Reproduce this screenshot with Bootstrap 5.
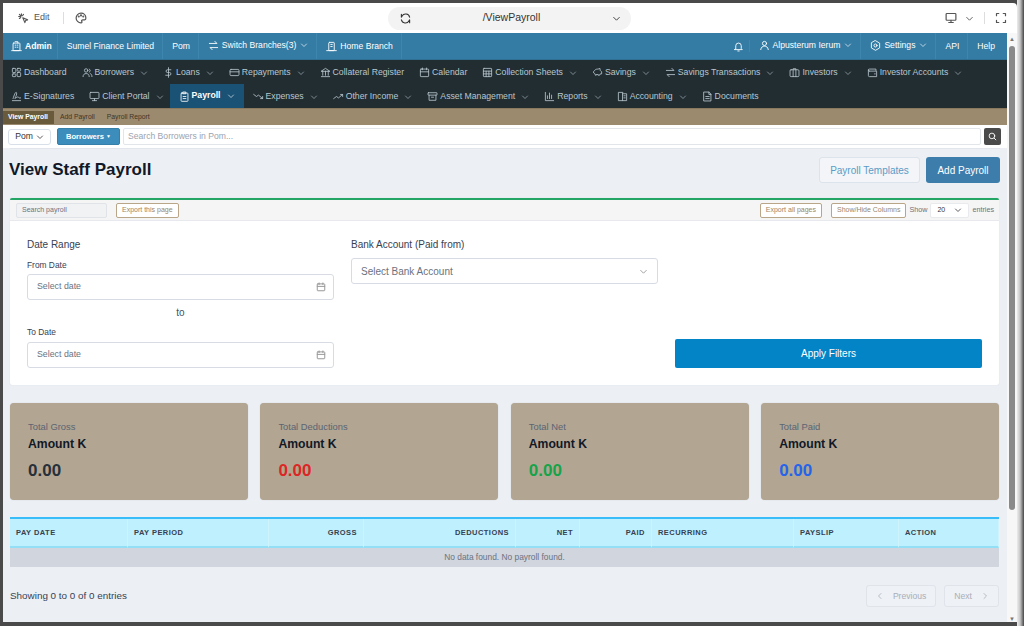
<!DOCTYPE html>
<html lang="en">
<head>
  <meta charset="UTF-8">
  <title>View Payroll</title>
  <link href="https://cdn.jsdelivr.net/npm/bootstrap@5.3.0/dist/css/bootstrap.min.css" rel="stylesheet">
  <style>
    html, body { height: 100%; overflow: hidden; }
    body { background: linear-gradient(to right, #4a4a4a 1017px, #ececec 1017px, #c8c8c8 1020px, #8a8a8a 1022px, #444 1024px); font-family: "Liberation Sans", Arial, sans-serif; font-size: 9px; color: #1f2937; padding: 3px 7px 4px 3px; }
    svg { fill: none; stroke: currentColor; stroke-width: 1.6; stroke-linecap: round; stroke-linejoin: round; flex: none; }
    .chev { margin-left: 4px; }

    .shell { height: 100%; background: #fff; display: flex; flex-direction: column; border-top-right-radius: 4px; }
    .browser-bar { height: 30px; flex: none; padding: 0 10px 0 15px; color: #555; font-size: 9px; }
    .bar-left { width: 370px; gap: 5px; }
    .bar-sep { width: 1px; height: 12px; background: #ddd; }
    .sep-left { margin: 0 6px 0 8px; }
    .sep-right { margin: 0 6px 0 6px; }
    .url-pill { width: 243px; height: 23px; background: #f3f3f3; border-radius: 12px; font-size: 10.5px; color: #333; padding: 0 10px 0 12px; }
    .page-wrap { flex: 1; min-height: 0; display: flex; }
    .page { flex: 1; min-width: 0; background: #ecf0f5; }
    .scroll-rail { width: 10px; flex: none; background: #f7f7f7; display: flex; flex-direction: column; align-items: center; padding: 3px 0 0 0; color: #777; font-size: 6px; line-height: 6px; }
    .scroll-thumb { width: 6px; height: 464px; background: #8a8a8a; border-radius: 3px; margin-top: 4px; margin-bottom: auto; }

    .top-blue { height: 27px; background: #357ca5; color: #fff; font-size: 8.6px; border-bottom: 1px solid #2f6f95; }
    .top-cell { padding: 1px 8px 0 9px; height: 100%; display: flex; align-items: center; gap: 3px; border-right: 1px solid #3f86ae; white-space: nowrap; }
    .top-cell svg { stroke-width: 1.3; }
    .top-cell .chev { margin-left: 1px; }
    .no-line { border-right: 0; }
    .cell-raise { padding-top: 0; padding-bottom: 2px; }

    .side-menu { background: #222d32; color: #b8c7ce; font-size: 8.7px; height: 48px; }
    .menu-row { height: 24px; padding: 1px 0 0 8px; gap: 15px; }
    .menu-item { height: 23px; display: flex; align-items: center; gap: 2px; white-space: nowrap; }
    .menu-item svg { stroke-width: 1.2; }
    .menu-on { background: #1a5276; color: #fff; height: 24px; margin: -1px -6px 0 -9px; padding: 0 9px 0 9px; }

    .sub-tabs { height: 17px; background: #9c8a6e; border-top: 1px solid #8a795e; font-size: 6.8px; color: #3e3526; }
    .sub-tab { padding: 0 6px; height: 13px; display: flex; align-items: center; }
    .sub-on { background: #6a5a3c; color: #fff; font-weight: bold; padding: 0 6px 0 5px; margin-right: 0; }

    .search-strip { height: 23px; background: #fff; padding: 0 6px 0 5px; gap: 3px; }
    .branch-pick { width: 43px; height: 16px; border: 1px solid #d8dfe8; border-radius: 3px; font-size: 8.6px; color: #333; gap: 3px; }
    .branch-pick .chev { margin-left: 0; }
    .borrow-btn { width: 63px; height: 17px; margin-left: 3px; background: #3c8dbc; color: #fff; border-radius: 2px; font-size: 7.6px; font-weight: bold; border: 1px solid #367fa9; }
    .caret-mini { font-size: 5px; }
    .search-box { flex: 1; height: 17px; border: 1px solid #e2e5ea; border-radius: 2px; color: #9ca3af; font-size: 8.6px; padding-left: 4px; }
    .search-go { width: 17px; height: 17px; background: #4a4a4a; border-radius: 2px; color: #fff; }

    .content { padding: 0 8px 0 7px; }
    .title-row { height: 50px; padding-top: 8px; border-top: 1px solid #e2e6ec; margin-right: -1px; }
    .title-row h1 { font-size: 17px; line-height: 26px; font-weight: bold; margin: 0 0 0 -1px; color: #111827; }
    .title-btns { gap: 6px; }
    .tpl-btn { height: 26px; width: 101px; border: 1px solid #dde3ea; background: #f3f5f8; border-radius: 3px; color: #5a9bc7; font-size: 10px; }
    .add-btn { height: 26px; width: 74px; background: #3c7dac; border-radius: 3px; color: #fff; font-size: 10px; }

    .filter-box { background: #fff; border-top: 2px solid #22a565; border-radius: 2px; box-shadow: 0 0 1px #ccd; height: 187px; }
    .tool-strip { height: 21px; background: #f5f5f5; border-bottom: 1px solid #e7e9ee; padding: 0 5px 0 6px; font-size: 7.2px; color: #6b7280; gap: 3px; }
    .tool-search { width: 91px; height: 15px; border: 1px solid #e0e3e8; border-radius: 2px; background: #f1f2f4; color: #6b7280; padding-left: 5px; font-size: 7px; }
    .tool-btn { height: 15px; border: 1px solid #b9a587; border-radius: 2px; background: #fff; color: #9a8669; padding: 0 5px; font-size: 7px; white-space: nowrap; }
    .btn-apart { margin-left: 6px; }
    .page-size { width: 39px; height: 15px; background: #fff; border: 1px solid #e8eaee; border-radius: 2px; color: #333; font-size: 7px; padding: 0 6px; }

    .filter-grid { padding: 18px 17px 0 17px; height: 164px; display: grid; grid-template-columns: 307px 307px 307px; column-gap: 17px; }
    .field-title { font-size: 10px; color: #374151; line-height: 12px; margin-bottom: 9px; }
    .bank-title { margin-bottom: 7px; }
    .field-small { font-size: 8.4px; color: #374151; line-height: 10px; margin-bottom: 4px; }
    .field-low { margin-bottom: 5px; }
    .date-box { height: 26px; border: 1px solid #d8dbe3; border-radius: 3px; padding: 0 7px 0 9px; color: #6b7280; font-size: 8.8px; }
    .date-box svg, .bank-box svg { color: #999; }
    .to-label { text-align: center; font-size: 10px; color: #3b5568; line-height: 12px; margin: 7px 0 8px 0; }
    .bank-box { height: 26px; border: 1px solid #d8dbe3; border-radius: 3px; padding: 0 9px; color: #6b7280; font-size: 10px; }
    .apply-cell { display: flex; align-items: flex-end; padding-bottom: 17px; }
    .apply-btn { width: 100%; height: 29px; background: #0284c7; color: #fff; font-size: 10px; border-radius: 2px; }

    .stat-grid { display: grid; grid-template-columns: repeat(4, 1fr); gap: 12.5px; margin-top: 18px; }
    .stat-box { height: 97px; background: #b2a692; border-radius: 4px; padding: 18px 18px; box-shadow: 0 0 1px #bbb; }
    .stat-label { font-size: 9.4px; color: #5b6472; line-height: 12px; }
    .stat-head { font-size: 12.2px; font-weight: bold; color: #111827; line-height: 16px; margin-top: 3px; }
    .stat-num { font-size: 17px; font-weight: bold; line-height: 20px; margin-top: 9px; color: #27303a; }
    .num-red { color: #dc2626; }
    .num-green { color: #16a34a; }
    .num-blue { color: #2563eb; }

    .pay-table { margin-top: 17px; width: 100%; table-layout: fixed; border-collapse: separate; border-spacing: 0; border-top: 2px solid #38bdf8; font-size: 7.5px; }
    .pay-table th { background: #bef0fd; height: 29px; padding: 0 6px; font-weight: bold; letter-spacing: .45px; color: #374151; border-bottom: 2px solid #93dff5; border-right: 1px solid #cdf4fd; white-space: nowrap; }
    .pay-table td { background: #d1d5de; height: 19px; text-align: center; color: #6b7280; font-size: 8.4px; padding: 0; }

    .foot-row { margin-top: 18px; font-size: 9.9px; color: #374151; }
    .pg-btn { height: 22px; border: 1px solid #e0e4ea; border-radius: 3px; background: #eef1f5; color: #a8aeb8; font-size: 8.6px; padding: 0 9px; gap: 9px; }
  </style>
</head>
<body>
  <div class="shell">

    <!-- browser toolbar -->
    <div class="browser-bar d-flex align-items-center">
      <div class="bar-left d-flex align-items-center">
        <svg width="11" height="11" viewBox="0 0 16 16"><path d="M7 7l7 3-3 1-1 3zM5 1v3M1 5h3M2 2l2 2M8 2L6.500 4M2 8l2-1.500"/></svg>
        <span>Edit</span>
        <span class="bar-sep sep-left"></span>
        <svg width="12" height="12" viewBox="0 0 16 16"><path d="M8 1.500a6.500 6.500 0 1 0 0 13c1.500 0 1.500-1 1-2s0-2 1.500-2H13c1 0 1.500-1 1.500-2.500C14.500 4 11.500 1.500 8 1.500z"/><circle cx="5" cy="6" r=".6"/><circle cx="8" cy="4.500" r=".6"/><circle cx="11" cy="6" r=".6"/></svg>
      </div>
      <div class="url-pill d-flex align-items-center justify-content-between">
        <svg width="11" height="11" viewBox="0 0 16 16"><path d="M14 6A6 6 0 0 0 3 4.500L2 6V2M2 10a6 6 0 0 0 11 1.500L14 10v4"/></svg>
        <span>/ViewPayroll</span>
        <svg width="9" height="9" viewBox="0 0 16 16"><path d="M3 6l5 5 5-5"/></svg>
      </div>
      <div class="d-flex align-items-center ms-auto gap-1">
        <svg width="12" height="12" viewBox="0 0 16 16"><rect x="1.500" y="2" width="13" height="9" rx="1"/><path d="M8 11v3M5 14h6"/></svg>
        <svg class="chev" width="9" height="9" viewBox="0 0 16 16"><path d="M3 6l5 5 5-5"/></svg>
        <span class="bar-sep sep-right"></span>
        <svg width="12" height="12" viewBox="0 0 16 16"><path d="M2 5V2h3M11 2h3v3M14 11v3h-3M5 14H2v-3"/></svg>
      </div>
    </div>

    <div class="page-wrap">
      <div class="page">

        <!-- blue bar -->
        <div class="top-blue d-flex align-items-center justify-content-between">
          <div class="d-flex h-100">
            <div class="top-cell fw-bold" style="padding-left:8px;padding-right:5px">
              <svg width="11" height="11" viewBox="0 0 16 16"><rect x="3" y="3" width="10" height="11" rx="1"/><path d="M1 14h14M6 6h1M9 6h1M6 9h1M9 9h1M6 1h4v2"/></svg>Admin
            </div>
            <div class="top-cell">Sumel Finance Limited</div>
            <div class="top-cell">Pom</div>
            <div class="top-cell cell-raise">
              <svg width="11" height="11" viewBox="0 0 16 16"><path d="M2 5h11l-3-3M14 11H3l3 3"/></svg>Switch Branches(3)
              <svg class="chev" width="8" height="8" viewBox="0 0 16 16"><path d="M3 6l5 5 5-5"/></svg>
            </div>
            <div class="top-cell">
              <svg width="11" height="11" viewBox="0 0 16 16"><rect x="4" y="2" width="8" height="12" rx="1"/><path d="M1 14h14M7 5h2M7 8h2"/></svg>Home Branch
            </div>
          </div>
          <div class="d-flex h-100 align-items-center">
            <div class="top-cell" style="padding-right:5px;height:12px">
              <svg width="11" height="11" viewBox="0 0 16 16"><path d="M4 11V7a4 4 0 0 1 8 0v4l1.500 1.500h-11zM7 14.500h2"/></svg>
            </div>
            <div class="top-cell cell-raise no-line">
              <svg width="11" height="11" viewBox="0 0 16 16"><circle cx="8" cy="5" r="3"/><path d="M2.500 14c.5-4 3-5 5.500-5s5 1 5.500 5"/></svg>Alpusterum Ierum
              <svg class="chev" width="8" height="8" viewBox="0 0 16 16"><path d="M3 6l5 5 5-5"/></svg>
            </div>
            <div class="top-cell cell-raise" style="border-left:1px solid #3f86ae">
              <svg width="11" height="11" viewBox="0 0 16 16"><path d="M8 1l6 3.500v7L8 15l-6-3.500v-7z"/><circle cx="8" cy="8" r="2.200"/></svg>Settings
              <svg class="chev" width="8" height="8" viewBox="0 0 16 16"><path d="M3 6l5 5 5-5"/></svg>
            </div>
            <div class="top-cell">API</div>
            <div class="top-cell no-line" style="padding-right:12px">Help</div>
          </div>
        </div>

        <!-- main menu -->
        <div class="side-menu">
          <div class="menu-row d-flex align-items-center">
            <div class="menu-item"><svg width="11" height="11" viewBox="0 0 16 16"><rect x="2" y="2" width="5" height="6" rx="1"/><rect x="9" y="2" width="5" height="4" rx="1"/><rect x="2" y="10" width="5" height="4" rx="1"/><rect x="9" y="8" width="5" height="6" rx="1"/></svg>Dashboard</div>
            <div class="menu-item"><svg width="11" height="11" viewBox="0 0 16 16"><circle cx="6" cy="5" r="2.500"/><path d="M1.500 14c0-3 2-4.500 4.500-4.500s4.500 1.500 4.500 4.500M10.500 3a2.500 2.500 0 0 1 0 4.500M12 9.500c1.500.5 2.500 2 2.500 4.500"/></svg>Borrowers <svg class="chev" width="8" height="8" viewBox="0 0 16 16"><path d="M3 6l5 5 5-5"/></svg></div>
            <div class="menu-item"><svg width="11" height="11" viewBox="0 0 16 16"><path d="M8 1v14M11.500 4H6.500a2 2 0 0 0 0 4h3a2 2 0 0 1 0 4H4"/></svg>Loans <svg class="chev" width="8" height="8" viewBox="0 0 16 16"><path d="M3 6l5 5 5-5"/></svg></div>
            <div class="menu-item"><svg width="11" height="11" viewBox="0 0 16 16"><rect x="1.500" y="3.500" width="13" height="9" rx="1.500"/><path d="M1.500 7h13"/></svg>Repayments <svg class="chev" width="8" height="8" viewBox="0 0 16 16"><path d="M3 6l5 5 5-5"/></svg></div>
            <div class="menu-item"><svg width="11" height="11" viewBox="0 0 16 16"><path d="M2 6l6-4 6 4zM4 6v6M8 6v6M12 6v6M2 14h12"/></svg>Collateral Register</div>
            <div class="menu-item"><svg width="11" height="11" viewBox="0 0 16 16"><rect x="2" y="3" width="12" height="11" rx="1"/><path d="M2 7h12M5 1.500V4M11 1.500V4"/></svg>Calendar</div>
            <div class="menu-item"><svg width="11" height="11" viewBox="0 0 16 16"><rect x="2" y="2" width="12" height="12" rx="1"/><path d="M2 6h12M2 10h12M6 6v8M10 6v8"/></svg>Collection Sheets <svg class="chev" width="8" height="8" viewBox="0 0 16 16"><path d="M3 6l5 5 5-5"/></svg></div>
            <div class="menu-item"><svg width="11" height="11" viewBox="0 0 16 16"><path d="M3 6c1-2 3-3 5.500-3 1 0 2-.5 3-1l.5 3 2 2v3h-2l-1 2H9v-1H6v1H5L4 9.500 2 8z"/></svg>Savings <svg class="chev" width="8" height="8" viewBox="0 0 16 16"><path d="M3 6l5 5 5-5"/></svg></div>
            <div class="menu-item"><svg width="11" height="11" viewBox="0 0 16 16"><path d="M2 5h11l-3-3M14 11H3l3 3"/></svg>Savings Transactions <svg class="chev" width="8" height="8" viewBox="0 0 16 16"><path d="M3 6l5 5 5-5"/></svg></div>
            <div class="menu-item"><svg width="11" height="11" viewBox="0 0 16 16"><rect x="1.500" y="4" width="13" height="10" rx="1.500"/><path d="M6 14V2.500h4V14"/></svg>Investors <svg class="chev" width="8" height="8" viewBox="0 0 16 16"><path d="M3 6l5 5 5-5"/></svg></div>
            <div class="menu-item"><svg width="11" height="11" viewBox="0 0 16 16"><path d="M13 5V3H3.500a1.500 1.500 0 0 0 0 3M2 4.500v8A1.500 1.500 0 0 0 3.500 14H14V6H3.500M11 10h1"/></svg>Investor Accounts <svg class="chev" width="8" height="8" viewBox="0 0 16 16"><path d="M3 6l5 5 5-5"/></svg></div>
          </div>
          <div class="menu-row d-flex align-items-center">
            <div class="menu-item"><svg width="11" height="11" viewBox="0 0 16 16"><path d="M2 14h12M3 11c2-6 3-9 4.500-9S8 7 6 10s4-3 5-1 1 1 3 1"/></svg>E-Signatures</div>
            <div class="menu-item"><svg width="11" height="11" viewBox="0 0 16 16"><rect x="1.500" y="2" width="13" height="9" rx="1"/><path d="M8 11v3M5 14h6"/></svg>Client Portal <svg class="chev" width="8" height="8" viewBox="0 0 16 16"><path d="M3 6l5 5 5-5"/></svg></div>
            <div class="menu-item menu-on fw-bold"><svg width="11" height="11" viewBox="0 0 16 16"><rect x="3" y="3" width="10" height="12" rx="1"/><path d="M6 1.500h4V4H6zM6 8h4M6 11h4"/></svg>Payroll <svg class="chev" width="8" height="8" viewBox="0 0 16 16"><path d="M3 6l5 5 5-5"/></svg></div>
            <div class="menu-item"><svg width="11" height="11" viewBox="0 0 16 16"><path d="M1 5l4 3 3-2 6 5M14 8v3h-3"/></svg>Expenses <svg class="chev" width="8" height="8" viewBox="0 0 16 16"><path d="M3 6l5 5 5-5"/></svg></div>
            <div class="menu-item"><svg width="11" height="11" viewBox="0 0 16 16"><path d="M1 11l4-3 3 2 6-5M14 8V5h-3"/></svg>Other Income <svg class="chev" width="8" height="8" viewBox="0 0 16 16"><path d="M3 6l5 5 5-5"/></svg></div>
            <div class="menu-item"><svg width="11" height="11" viewBox="0 0 16 16"><rect x="1.500" y="2.500" width="13" height="3.500" rx=".5"/><path d="M3 6v7.500h10V6M6.500 9h3"/></svg>Asset Management <svg class="chev" width="8" height="8" viewBox="0 0 16 16"><path d="M3 6l5 5 5-5"/></svg></div>
            <div class="menu-item"><svg width="11" height="11" viewBox="0 0 16 16"><path d="M2 2v12h12M5 11V7M8 11V3M11 11V6"/></svg>Reports <svg class="chev" width="8" height="8" viewBox="0 0 16 16"><path d="M3 6l5 5 5-5"/></svg></div>
            <div class="menu-item"><svg width="11" height="11" viewBox="0 0 16 16"><path d="M8 4v10H2V2h6zM8 4h6v10H8M10 7h2M10 10h2"/></svg>Accounting <svg class="chev" width="8" height="8" viewBox="0 0 16 16"><path d="M3 6l5 5 5-5"/></svg></div>
            <div class="menu-item"><svg width="11" height="11" viewBox="0 0 16 16"><path d="M3 1.500h7l3 3V14.500H3zM10 1.500V5h3M5.500 8h5M5.500 11h5"/></svg>Documents</div>
          </div>
        </div>

        <!-- sub tabs -->
        <div class="sub-tabs d-flex align-items-center">
          <div class="sub-tab sub-on">View Payroll</div>
          <div class="sub-tab">Add Payroll</div>
          <div class="sub-tab">Payroll Report</div>
        </div>

        <!-- borrower search -->
        <div class="search-strip d-flex align-items-center">
          <div class="branch-pick d-flex align-items-center justify-content-center">Pom <svg class="chev" width="8" height="8" viewBox="0 0 16 16"><path d="M3 6l5 5 5-5"/></svg></div>
          <div class="borrow-btn d-flex align-items-center justify-content-center">Borrowers&nbsp;<span class="caret-mini">▼</span></div>
          <div class="search-box d-flex align-items-center">Search Borrowers in Pom...</div>
          <div class="search-go d-flex align-items-center justify-content-center"><svg width="9" height="9" viewBox="0 0 16 16"><circle cx="7" cy="7" r="5"/><path d="M11 11l3 3"/></svg></div>
        </div>

        <div class="content">
          <div class="title-row d-flex align-items-start justify-content-between">
            <h1>View Staff Payroll</h1>
            <div class="title-btns d-flex">
              <div class="tpl-btn d-flex align-items-center justify-content-center">Payroll Templates</div>
              <div class="add-btn d-flex align-items-center justify-content-center">Add Payroll</div>
            </div>
          </div>

          <!-- filters -->
          <div class="filter-box">
            <div class="tool-strip d-flex align-items-center">
              <div class="tool-search d-flex align-items-center">Search payroll</div>
              <div class="tool-btn d-flex align-items-center btn-apart">Export this page</div>
              <div class="tool-btn d-flex align-items-center ms-auto">Export all pages</div>
              <div class="tool-btn d-flex align-items-center btn-apart">Show/Hide Columns</div>
              <span>Show</span>
              <div class="page-size d-flex align-items-center justify-content-between">20 <svg width="8" height="8" viewBox="0 0 16 16"><path d="M3 6l5 5 5-5"/></svg></div>
              <span>entries</span>
            </div>
            <div class="filter-grid">
              <div>
                <div class="field-title">Date Range</div>
                <div class="field-small">From Date</div>
                <div class="date-box d-flex align-items-center justify-content-between">Select date <svg width="10" height="10" viewBox="0 0 16 16"><rect x="2" y="3" width="12" height="11" rx="1"/><path d="M2 7h12M5 1.500V4M11 1.500V4"/></svg></div>
                <div class="to-label">to</div>
                <div class="field-small field-low">To Date</div>
                <div class="date-box d-flex align-items-center justify-content-between">Select date <svg width="10" height="10" viewBox="0 0 16 16"><rect x="2" y="3" width="12" height="11" rx="1"/><path d="M2 7h12M5 1.500V4M11 1.500V4"/></svg></div>
              </div>
              <div>
                <div class="field-title bank-title">Bank Account (Paid from)</div>
                <div class="bank-box d-flex align-items-center justify-content-between">Select Bank Account <svg width="9" height="9" viewBox="0 0 16 16"><path d="M3 6l5 5 5-5"/></svg></div>
              </div>
              <div class="apply-cell">
                <div class="apply-btn d-flex align-items-center justify-content-center">Apply Filters</div>
              </div>
            </div>
          </div>

          <!-- totals -->
          <div class="stat-grid">
            <div class="stat-box"><div class="stat-label">Total Gross</div><div class="stat-head">Amount K</div><div class="stat-num">0.00</div></div>
            <div class="stat-box"><div class="stat-label">Total Deductions</div><div class="stat-head">Amount K</div><div class="stat-num num-red">0.00</div></div>
            <div class="stat-box"><div class="stat-label">Total Net</div><div class="stat-head">Amount K</div><div class="stat-num num-green">0.00</div></div>
            <div class="stat-box"><div class="stat-label">Total Paid</div><div class="stat-head">Amount K</div><div class="stat-num num-blue">0.00</div></div>
          </div>

          <!-- payroll table -->
          <table class="pay-table">
            <colgroup>
              <col style="width:118px"><col style="width:141px"><col style="width:95px"><col style="width:152px"><col style="width:64px"><col style="width:72px"><col style="width:142px"><col style="width:105px"><col>
            </colgroup>
            <thead>
              <tr>
                <th>PAY DATE</th><th>PAY PERIOD</th><th class="text-end">GROSS</th><th class="text-end">DEDUCTIONS</th><th class="text-end">NET</th><th class="text-end">PAID</th><th>RECURRING</th><th>PAYSLIP</th><th>ACTION</th>
              </tr>
            </thead>
            <tbody>
              <tr><td colspan="9">No data found. No payroll found.</td></tr>
            </tbody>
          </table>

          <div class="foot-row d-flex align-items-center justify-content-between">
            <span>Showing 0 to 0 of 0 entries</span>
            <div class="d-flex gap-2">
              <div class="pg-btn d-flex align-items-center"><svg width="8" height="8" viewBox="0 0 16 16"><path d="M10 3L5 8l5 5"/></svg>Previous</div>
              <div class="pg-btn d-flex align-items-center">Next<svg width="8" height="8" viewBox="0 0 16 16"><path d="M6 3l5 5-5 5"/></svg></div>
            </div>
          </div>
        </div>
      </div>

      <div class="scroll-rail">
        <span>▲</span>
        <div class="scroll-thumb"></div>
        <span>▼</span>
      </div>
    </div>
  </div>
  <script src="https://cdn.jsdelivr.net/npm/bootstrap@5.3.0/dist/js/bootstrap.bundle.min.js"></script>
</body>
</html>
